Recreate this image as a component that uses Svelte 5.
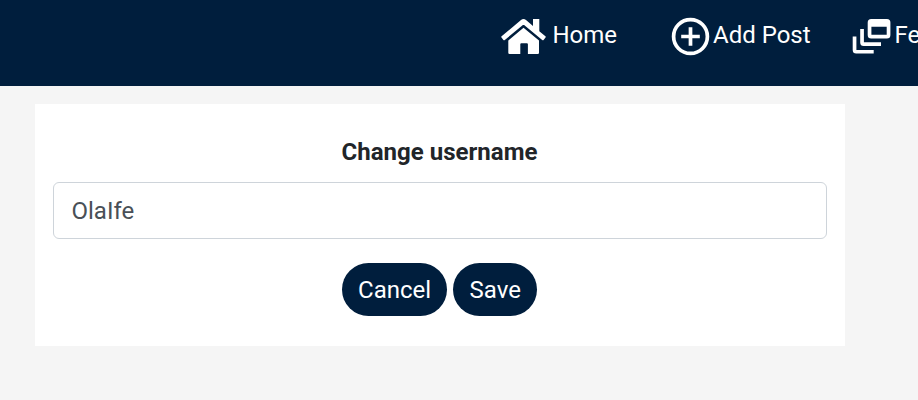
<script>
  let username = $state('OlaIfe');
</script>

<div class="page">
  <nav>
    <a class="home" href="#home">
      <svg width="46" height="36" viewBox="0 0 46 36" fill="#fff">
        <path d="M20 1.1Q22.5 -.9 25 1.1L32 6.9V0H38.3V12.3L44.4 17.3Q45.1 17.9 44.5 18.6L42.6 20.9Q42 21.6 41.2 21L23.1 6.1Q22.5 5.7 21.9 6.1L3.8 21Q3 21.6 2.4 20.9L.5 18.6Q-.1 17.9 .6 17.3Z" />
        <path d="M22.5 8.8L38 21.6V33.8Q38 35 36.8 35H26.9V25.2Q26.9 24.2 25.9 24.2H20.3Q19.3 24.2 19.3 25.2V35H8.5Q7.3 35 7.3 33.8V21.6Z" />
      </svg>
      <span>Home</span>
    </a>
    <a class="add" href="#add">
      <svg width="38" height="38" viewBox="0 0 38 38" fill="none" stroke="#fff">
        <circle cx="18.5" cy="18.5" r="16.9" stroke-width="3.7" />
        <path d="M18.5 9.2V27.8M9.2 18.5H27.8" stroke-width="3.7" />
      </svg>
      <span>Add Post</span>
    </a>
    <a class="feed" href="#feed">
      <svg width="38" height="35" viewBox="0 0 38 35" fill="#fff">
        <path fill-rule="evenodd" d="M18.2 0H33.9Q37.4 0 37.4 3.5V16Q37.4 19.5 33.9 19.5H18.2Q14.7 19.5 14.7 16V3.5Q14.7 0 18.2 0ZM18.4 7.7V15.7H33.7V7.7Z" />
        <path d="M7.2 10H10.9V23.2H28V27H10.7Q7.2 27 7.2 23.5Z" />
        <path d="M-.3 17.5H3.4V30.9H20.7V34.6H3.2Q-.3 34.6 -.3 31.1Z" />
      </svg>
      <span>Feed</span>
    </a>
  </nav>
  <main>
    <label for="username">Change username</label>
    <input id="username" type="text" bind:value={username} />
    <div class="actions">
      <button type="button">Cancel</button>
      <button type="button">Save</button>
    </div>
  </main>
</div>

<style>
  .page {
    box-sizing: border-box;
    height: 400px;
    overflow: hidden;
    background: #f5f5f5;
    font: 24px/36px Roboto, sans-serif;
    color: #212529;
  }
  nav {
    display: flex;
    align-items: flex-start;
    box-sizing: border-box;
    height: 86px;
    padding: 17px 0 0 501px;
    background: #001e3d;
  }
  a {
    display: flex;
    flex: none;
    color: #fff;
    text-decoration: none;
    white-space: nowrap;
  }
  svg {
    display: block;
    flex: none;
    overflow: visible;
  }
  .home {
    width: 171px;
    gap: 5.5px;
  }
  .home svg, .feed svg {
    margin-top: 2px;
  }
  .add {
    width: 181px;
    gap: 3px;
  }
  .add svg {
    margin-top: 1px;
  }
  .feed {
    gap: 3.4px;
  }
  main {
    display: flex;
    flex-direction: column;
    align-items: center;
    box-sizing: border-box;
    width: 810px;
    height: 242px;
    margin: 18px 0 0 35px;
    padding: 30px 18px;
    background: #fff;
  }
  label {
    font-weight: 700;
    height: 48px;
    padding-right: 1px;
    letter-spacing: 0.02px;
  }
  input {
    box-sizing: border-box;
    width: 774px;
    height: 57px;
    flex: none;
    margin: 0;
    padding: 9px 17.5px;
    border: 1px solid #ced4da;
    border-radius: 6px;
    outline: none;
    background: #fff;
    color: #495057;
    font: inherit;
  }
  .actions {
    display: flex;
    gap: 6px;
    margin-top: 24px;
    padding-right: 1px;
  }
  button {
    height: 53px;
    margin: 0;
    padding: 0 16.2px;
    border: 0;
    border-radius: 27px;
    background: #001e3d;
    color: #fff;
    font: inherit;
  }
</style>
